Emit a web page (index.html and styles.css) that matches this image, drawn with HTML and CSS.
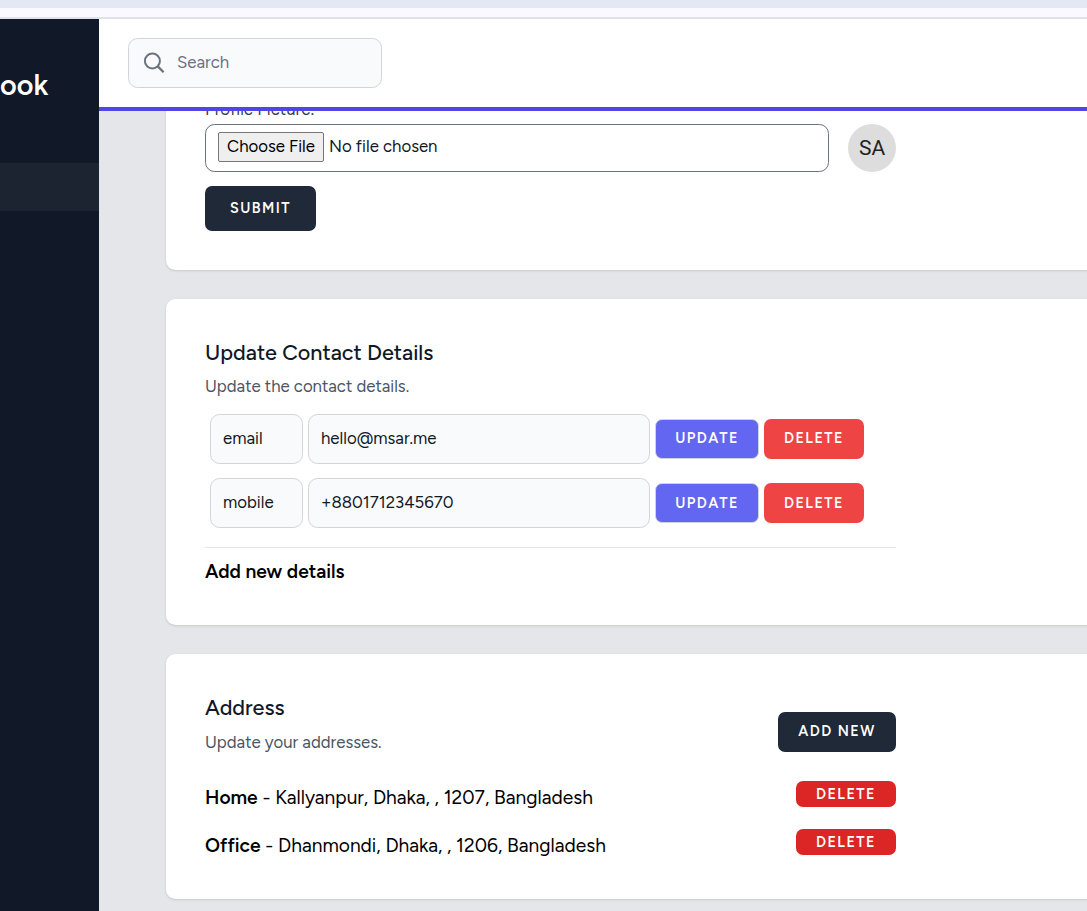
FILE: index.html
```html
<!DOCTYPE html>
<html lang="en">
<head>
<meta charset="utf-8">
<title>Profile</title>
<link rel="stylesheet" href="styles.css">
</head>
<body>
<div class="chrome"></div>
<div class="app">
  <aside class="sidebar">
    <div class="brand">ook</div>
    <nav><a class="nav-item"></a></nav>
  </aside>
  <div class="main">
    <header class="topbar">
      <label class="search">
        <svg class="search-icon" viewBox="0 0 22 24" fill="none" stroke="currentColor" stroke-width="2"><circle cx="9.4" cy="10" r="7.5"/><path d="M14.8 15.4 20.6 21.2" stroke-width="2.3"/></svg>
        <span class="search-text">Search</span>
      </label>
    </header>
    <main class="content">
      <section class="card card-profile">
        <div class="field-label">Profile Picture:</div>
        <div class="upload-row">
          <div class="file-input">
            <button class="file-button">Choose File</button>
            <span class="file-none">No file chosen</span>
          </div>
          <div class="avatar">SA</div>
        </div>
        <button class="btn btn-dark btn-submit">Submit</button>
      </section>
      <section class="card card-contact">
        <h2 class="heading">Update Contact Details</h2>
        <p class="sub">Update the contact details.</p>
        <div class="contact-row contact-first">
          <div class="input input-kind">email</div>
          <div class="input input-value">hello@msar.me</div>
          <button class="btn btn-update">Update</button>
          <button class="btn btn-delete">Delete</button>
        </div>
        <div class="contact-row">
          <div class="input input-kind">mobile</div>
          <div class="input input-value">+8801712345670</div>
          <button class="btn btn-update">Update</button>
          <button class="btn btn-delete">Delete</button>
        </div>
        <div class="add-details">Add new details</div>
      </section>
      <section class="card card-address">
        <div class="address-head">
          <div>
            <h2 class="heading">Address</h2>
            <p class="sub">Update your addresses.</p>
          </div>
          <button class="btn btn-dark btn-add">Add new</button>
        </div>
        <div class="address-row">
          <div class="address-text"><b>Home</b> - Kallyanpur, Dhaka, , 1207, Bangladesh</div>
          <button class="btn btn-remove">Delete</button>
        </div>
        <div class="address-row">
          <div class="address-text"><b>Office</b> - Dhanmondi, Dhaka, , 1206, Bangladesh</div>
          <button class="btn btn-remove">Delete</button>
        </div>
      </section>
    </main>
  </div>
</div>
</body>
</html>
```
FILE: styles.css
```css
* { box-sizing: border-box; margin: 0; padding: 0; }
body {
  display: flex;
  flex-direction: column;
  height: 911px;
  overflow: hidden;
  font-family: Figtree, Lato, "Liberation Sans", sans-serif;
  font-size: 16.8px;
  line-height: 24px;
  color: #111827;
  background: #e5e6ea;
}
button { font: inherit; border: 0; }
.chrome {
  flex: none;
  height: 19px;
  border-top: 8px solid #e4e8f4;
  border-bottom: 2px solid #dfe2ea;
  background: #f9f9ff;
}
.app { display: flex; flex: 1; min-height: 0; }
.sidebar { flex: none; width: 99px; background: #111827; }
.brand { height: 144px; padding-top: 47px; color: #fff; font-size: 28.8px; line-height: 38px; font-weight: 600; }
.nav-item { display: block; height: 48px; background: #1c2331; }
.main { flex: 1; min-width: 0; display: flex; flex-direction: column; }
.topbar {
  flex: none;
  display: flex;
  align-items: center;
  height: 92px;
  padding-left: 29px;
  background: #fff;
  border-bottom: 4px solid #4f46e5;
}
.search {
  display: flex;
  align-items: center;
  gap: 12px;
  width: 254px;
  height: 50px;
  padding-left: 14px;
  border: 1px solid #d1d5db;
  border-radius: 9.6px;
  background: #f9fafb;
  color: #6b7280;
}
.search-icon { width: 22px; height: 24px; }
.search-text { padding-bottom: 2px; }
.content {
  flex: 1;
  min-height: 0;
  overflow: hidden;
  display: flex;
  flex-direction: column;
  gap: 29px;
  padding-left: 67px;
}
.card {
  flex: none;
  width: 1000px;
  padding: 0 39px;
  background: #fff;
  border-radius: 9.6px;
  box-shadow: 0 1px 3px rgba(0,0,0,.1), 0 1px 2px -1px rgba(0,0,0,.1);
}
.card-profile { height: 189px; margin-top: -30px; padding-top: 14px; }
.field-label { height: 29px; line-height: 28px; color: #374151; }
.upload-row { display: flex; gap: 19px; margin-bottom: 14px; }
.file-input {
  display: flex;
  align-items: flex-start;
  gap: 5px;
  width: 624px;
  height: 48px;
  padding: 7px 12px;
  border: 1px solid #6b7280;
  border-radius: 9.6px;
}
.file-none { line-height: 29px; }
.file-button {
  width: 106px;
  height: 30px;
  padding-bottom: 2px;
  border: 1px solid #767676;
  border-radius: 2px;
  background: #efefef;
  color: #000;
}
.avatar {
  width: 48px;
  height: 48px;
  border-radius: 50%;
  background: #ddd;
  color: #222;
  font: 21px/49px Roboto, sans-serif;
  text-align: center;
}
.btn {
  display: flex;
  align-items: center;
  justify-content: center;
  flex: none;
  border-radius: 7px;
  color: #fff;
  font-size: 14.4px;
  font-weight: 600;
  letter-spacing: 1.44px;
  text-transform: uppercase;
}
.btn-dark { padding-bottom: 2px; background: #1f2937; }
.btn-submit { width: 111px; height: 45px; }
.card-contact { height: 326px; padding-top: 36px; }
.heading { height: 34px; font-size: 21.6px; line-height: 34px; font-weight: 500; }
.sub { height: 24px; margin-top: 5px; color: #4b5563; }
.contact-row { display: flex; align-items: center; height: 50px; margin: 14px 0 0 5px; }
.contact-first { margin-top: 16px; }
.contact-first .btn { padding-bottom: 2px; }
.input {
  height: 50px;
  padding-left: 12px;
  line-height: 46px;
  border: 1px solid #d1d5db;
  border-radius: 9.6px;
  background: #f9fafb;
}
.input-kind { width: 93px; margin-right: 5px; }
.input-value { width: 342px; margin-right: 5px; }
.btn-update { width: 104px; height: 40px; margin-right: 5px; border: 1px solid #d1d5db; background: #6366f1; }
.btn-delete { width: 100px; height: 40px; background: #ef4444; }
.add-details {
  width: 691px;
  margin-top: 19px;
  padding-top: 10px;
  border-top: 1px solid #e5e7eb;
  color: #000;
  font-size: 19.2px;
  line-height: 28px;
  font-weight: 600;
}
.card-address { height: 245px; padding-top: 36px; }
.card-address .sub { margin-top: 6px; }
.address-head { display: flex; justify-content: space-between; width: 691px; height: 91px; }
.btn-add { width: 118px; height: 40px; margin-top: 22px; }
.address-row { display: flex; justify-content: space-between; width: 691px; height: 48px; color: #000; font-size: 19.2px; }
.address-text { line-height: 34px; }
.address-text b { font-weight: 600; }
.btn-remove { width: 100px; height: 26px; background: #dc2626; }
```
